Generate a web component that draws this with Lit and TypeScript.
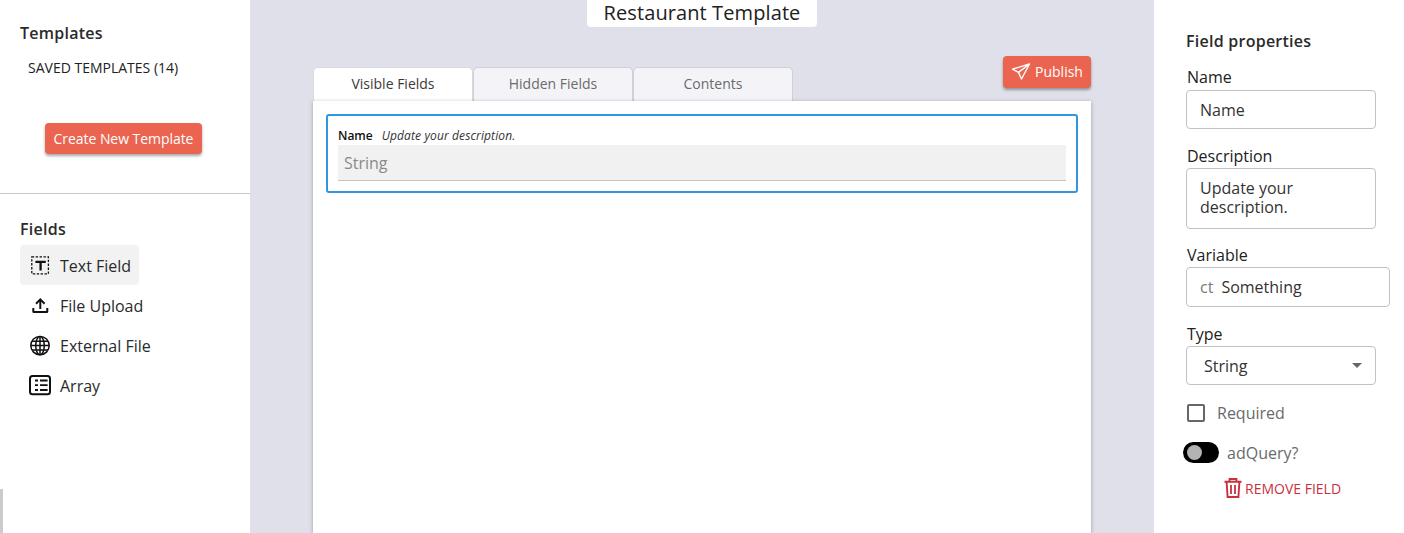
import { LitElement, html, css } from "lit";
import { customElement } from "lit/decorators.js";

@customElement("app-root")
export class AppRoot extends LitElement {
  static styles = css`
    :host { display: block; width: 1404px; height: 533px; overflow: hidden; font-family: "Open Sans", sans-serif; color: #212121; font-size: 16px; }
    * { box-sizing: border-box; }
    .page { display: grid; grid-template-columns: 250px 904px 250px; height: 533px; background: #fff; }
    .left { display: flex; flex-direction: column; background: #fff; height: 533px; }
    .top { height: 194px; border-bottom: 1px solid #c9c9cd; padding: 23px 0 0 20px; display: flex; flex-direction: column; }
    h3 { margin: 0; font-size: 16px; font-weight: 600; line-height: 20px; color: #2a2a2a; letter-spacing: 0.25px; }
    .saved { font-size: 14px; line-height: 20px; margin: 15px 0 0 8px; }
    .create { align-self: flex-start; margin: 45px 0 0 25px; width: 157px; height: 31px; background: #ea6450; color: #fff; font-size: 14px; border-radius: 4px; display: flex; align-items: center; justify-content: center; box-shadow: 0 2px 3px rgba(0,0,0,.35); padding-bottom: 1px; letter-spacing: -0.05px; }
    .fields { padding: 25px 0 0 20px; }
    .items { display: flex; flex-direction: column; align-items: flex-start; margin-top: 6px; }
    .item { height: 40px; display: flex; align-items: center; padding: 0 8px 0 8px; border-radius: 4px; gap: 8px; line-height: 20px; color: #2a2a2a; }
    .item span { padding-top: 2px; }
    .item.on { background: #f2f2f2; }
    .item svg { width: 24px; height: 24px; display: block; }
    .edge { margin-top: auto; width: 3px; height: 44px; background: #cbcbcb; }

    .center { background: #e0e0ea; display: flex; flex-direction: column; align-items: center; height: 533px; }
    .title { width: 230px; height: 27px; background: #fff; border-radius: 0 0 4px 4px; font-size: 20px; line-height: 25px; text-align: center; letter-spacing: 0.1px; }
    .work { width: 778px; margin-top: 29px; display: flex; flex-direction: column; flex: 1; }
    .tabbar { display: flex; align-items: flex-start; justify-content: space-between; height: 45px; }
    .tabs { display: flex; margin-top: 11px; }
    .tab { width: 160px; height: 34px; background: #f4f4f8; border: 1px solid #cfcfd6; border-bottom: none; border-radius: 5px 5px 0 0; font-size: 14px; color: #6b6b6b; display: flex; align-items: center; justify-content: center; padding-bottom: 2px; }
    .tab.on { background: #fff; color: #3a3a3a; border-color: #d9d9e2; }
    .publish { width: 88px; height: 32px; background: #ea6450; color: #fff; font-size: 14px; border-radius: 4px; display: flex; align-items: center; justify-content: center; gap: 4px; box-shadow: 0 2px 3px rgba(0,0,0,.35); }
    .publish span { padding-bottom: 2px; }
    .publish svg { width: 20px; height: 20px; display: block; }
    .panel { flex: 1; background: #fff; box-shadow: 0 1px 4px rgba(0,0,0,.3); padding: 13px; }
    .card { height: 79px; border: 2px solid #2f96e3; border-radius: 3px; padding: 10px 10px 0; }
    .card-label { display: flex; align-items: baseline; gap: 9px; height: 19px; line-height: 19px; font-size: 12px; }
    .card-label b { font-weight: 600; color: #111; }
    .card-label i { color: #333; letter-spacing: 0.12px; }
    .fake { height: 36px; background: #f1f1f1; border-bottom: 1px solid #c4c4c4; color: #8a8a8a; padding-left: 6px; line-height: 37px; }

    .right { padding: 31px 14px 0 32px; display: flex; flex-direction: column; background: #fff; height: 533px; }
    .lab { margin-left: 1px; line-height: 20px; font-size: 16px; color: #212121; margin-bottom: 2px; }
    .m16 { margin-top: 16px; }
    .m17 { margin-top: 17px; }
    .m3 { margin-bottom: 3px; }
    .box { width: 190px; border: 1px solid #c2c2c2; border-radius: 4px; padding-left: 13px; background: #fff; color: #333; display: flex; align-items: center; }
    .b39 { height: 39px; }
    .ta { height: 61px; display: block; padding: 10px 0 0 13px; line-height: 19px; }
    .wide { width: 204px; height: 40px; }
    .ct { color: #7a7a7a; margin-right: 8px; }
    .select { justify-content: space-between; padding: 0 13px 0 17px; }
    .arrow { width: 0; height: 0; border-left: 5px solid transparent; border-right: 5px solid transparent; border-top: 5px solid #666; }
    .check { display: flex; align-items: center; margin: 19px 0 0 1px; height: 18px; color: #6a6a6a; }
    .cb { width: 18px; height: 18px; border: 2px solid #666; border-radius: 2px; margin-right: 12px; }
    .toggle-row { display: flex; align-items: center; margin: 20px 0 0 -3px; height: 21px; color: #6a6a6a; }
    .toggle { width: 36px; height: 21px; background: #000; border-radius: 11px; margin-right: 8px; padding: 3px 0 0 4px; }
    .knob { width: 15px; height: 15px; border-radius: 50%; background: #b3b3b3; }
    .remove { display: flex; align-items: center; margin: 14px 0 0 38px; color: #c9303e; font-size: 14px; gap: 3px; height: 22px; }
    .remove svg { width: 18px; height: 20px; display: block; }
  `;

  render() {
    return html`<div class="page">
      <aside class="left">
        <div class="top">
          <h3>Templates</h3>
          <div class="saved">SAVED TEMPLATES (14)</div>
          <div class="create">Create New Template</div>
        </div>
        <div class="fields">
          <h3>Fields</h3>
          <div class="items">
            <div class="item on">
              <svg viewBox="0 0 24 24" fill="none" stroke="#111"><rect x="3.8" y="3.8" width="16.6" height="17" stroke-width="1.3" stroke-dasharray="2.4 1.5"/><path d="M7.4 8.8h10.4M12.6 8.8v8.8" stroke-width="2.3"/></svg>
              <span>Text Field</span>
            </div>
            <div class="item">
              <svg viewBox="0 0 24 24" fill="#111"><path d="M12.3 5l5 5-1.4 1.4-2.6-2.6V16h-2V8.8l-2.6 2.6L7.3 10z"/><path d="M4.3 15h2v3h12v-3h2v3.5a1.5 1.5 0 0 1-1.5 1.5h-13a1.5 1.5 0 0 1-1.5-1.5z"/></svg>
              <span>File Upload</span>
            </div>
            <div class="item">
              <svg viewBox="0 0 24 24" fill="none" stroke="#111" stroke-width="1.5"><circle cx="12" cy="12.6" r="9.2"/><ellipse cx="12" cy="12.6" rx="4.3" ry="9.2"/><path d="M12 3.4v18.4M2.8 12.6h18.4M4 8.2h16M4 17h16"/></svg>
              <span>External File</span>
            </div>
            <div class="item">
              <svg viewBox="0 0 24 24" fill="none" stroke="#111"><rect x="2" y="3" width="20" height="18.3" rx="2.5" stroke-width="2"/><path d="M12 7.5h7.6M12 12.2h7.6M12 17h7.6M7 7.5h3M7 12.2h3M7 17h3" stroke-width="1.8"/></svg>
              <span>Array</span>
            </div>
          </div>
        </div>
        <div class="edge"></div>
      </aside>

      <main class="center">
        <div class="title">Restaurant Template</div>
        <div class="work">
          <div class="tabbar">
            <div class="tabs">
              <div class="tab on">Visible Fields</div>
              <div class="tab">Hidden Fields</div>
              <div class="tab">Contents</div>
            </div>
            <div class="publish">
              <svg viewBox="0 0 20 20" fill="none" stroke="#fff" stroke-width="1.4" stroke-linejoin="round"><path d="M18.5 2L1.5 7.2l6 3.2 3 6.6z"/><path d="M18.5 2L7.5 10.4"/></svg>
              <span>Publish</span>
            </div>
          </div>
          <div class="panel">
            <div class="card">
              <div class="card-label"><b>Name</b><i>Update your description.</i></div>
              <div class="fake">String</div>
            </div>
          </div>
        </div>
      </main>

      <aside class="right">
        <h3>Field properties</h3>
        <div class="lab m16 m3">Name</div>
        <div class="box b39">Name</div>
        <div class="lab m17">Description</div>
        <div class="box ta">Update your<br />description.</div>
        <div class="lab m16">Variable</div>
        <div class="box wide"><span class="ct">ct</span>Something</div>
        <div class="lab m17">Type</div>
        <div class="box b39 select"><span>String</span><span class="arrow"></span></div>
        <div class="check"><span class="cb"></span>Required</div>
        <div class="toggle-row"><div class="toggle"><div class="knob"></div></div>adQuery?</div>
        <div class="remove">
          <svg viewBox="0 0 18 20" fill="none" stroke="#c9303e" stroke-width="1.9"><path d="M.5 3.8h17M5.6 3.5V1h6.8v2.5"/><path d="M2.6 4l1 15h10.8l1-15"/><path d="M7 7v9M11 7v9" stroke-width="1.8"/></svg>
          <span>REMOVE FIELD</span>
        </div>
      </aside>
    </div>`;
  }
}
